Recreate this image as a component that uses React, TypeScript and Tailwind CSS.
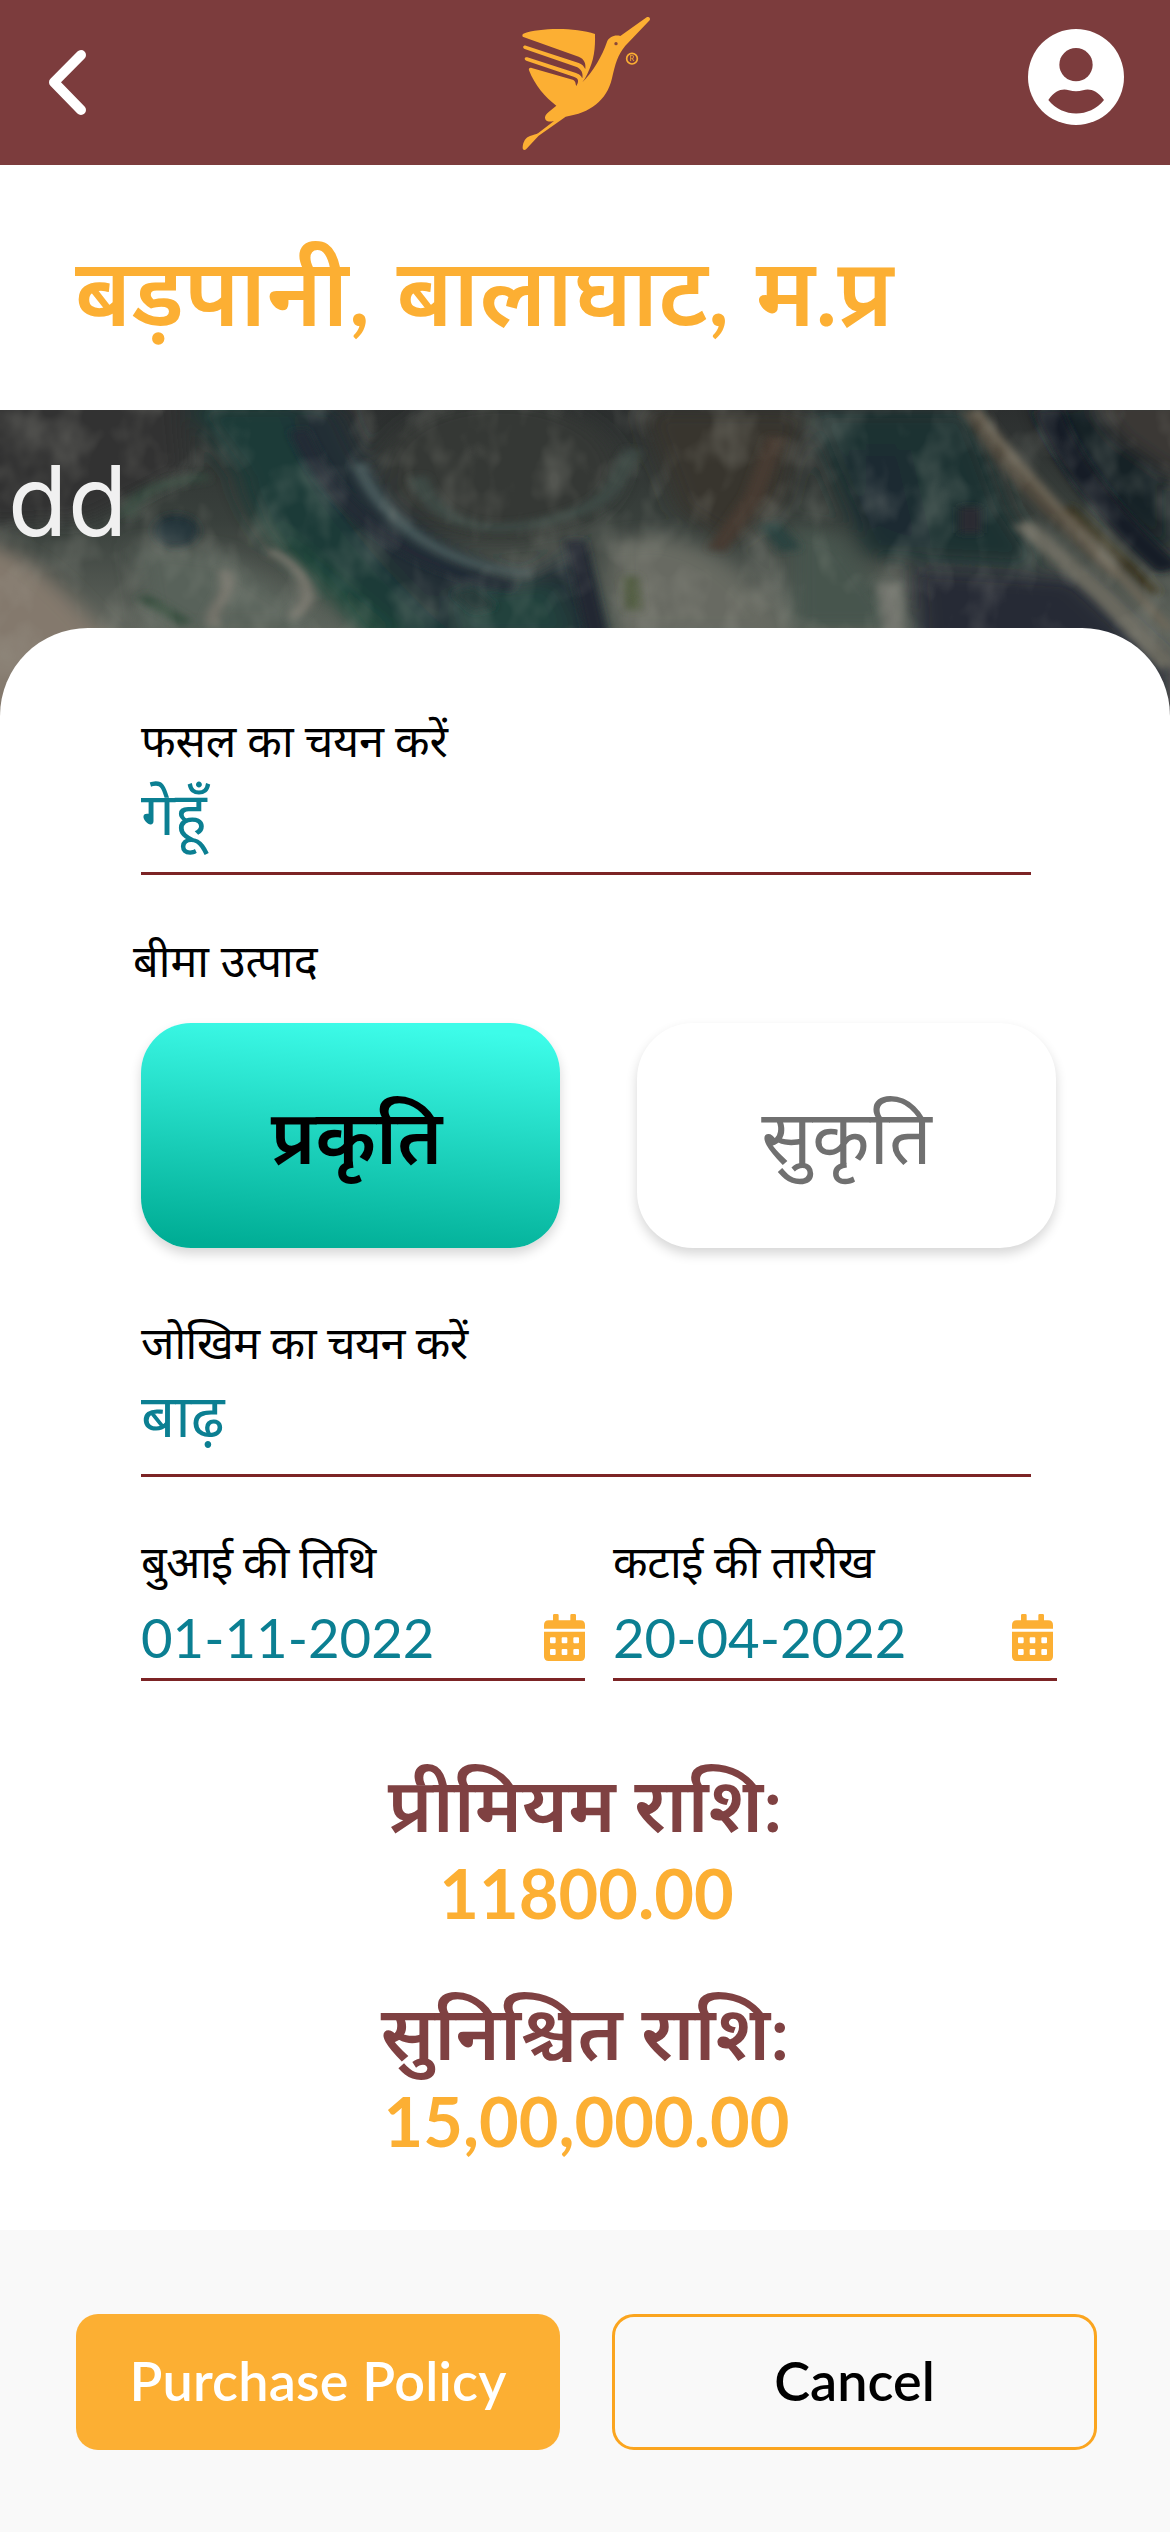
import React from "react";

function Bird() {
  return (
    <svg className="h-[165px] w-[220px]" viewBox="0 0 660 495" fill="#fcaf33">
      <path d="M130 101 C180 83 285 82 345 102 C346 145 343 180 322 222 C317 233 312 240 307 247 C338 217 368 165 380 128 C387 109 405 104 421 108 L500 52 C506 48 513 54 509 61 L436 137 C413 165 406 191 396 235 C380 303 330 339 257 350 L176 407 L139 447 C133 453 127 449 128 441 C129 426 137 412 150 408 C160 404 168 404 175 399 L222 363 C208 366 195 366 195 352 C196 345 200 342 206 336 L229 317 C196 293 164 255 147 211 C145 206 149 202 155 204 L278 239 C288 242 286 252 289 258 L293 250 C297 238 291 233 281 230 L139 182 C131 178 134 169 142 172 L288 219 C302 224 304 230 307 235 C310 219 304 206 288 200 L134 147 C126 143 130 134 138 137 L294 188 C310 193 312 201 316 207 C318 190 313 177 296 170 L130 111 C126 109 126 104 130 101Z" />
      <circle cx="408" cy="131" r="5" fill="#8a4838" />
      <circle cx="456" cy="176" r="16" fill="none" stroke="#fcaf33" strokeWidth="5" />
      <text x="456" y="184" textAnchor="middle" fontSize="23" fontWeight="700" fontFamily="Lato, sans-serif" opacity="0.8">R</text>
    </svg>
  );
}

function Account() {
  return (
    <svg className="h-[96px] w-[96px]" viewBox="0 0 288 288">
      <circle cx="144" cy="144" r="144" fill="#fff" />
      <circle cx="144" cy="107" r="50" fill="#7c3c3d" />
      <path d="M61 213 C82 183 104 178 123 184 C137 188 151 188 165 184 C184 178 206 183 228 213 C184 267 105 267 61 213Z" fill="#7c3c3d" />
    </svg>
  );
}

function Calendar() {
  return (
    <svg className="h-[47px] w-[41px]" viewBox="0 0 123 141" fill="#fcaf33">
      <path d="M0 44V33Q0 19 14 19H27V4Q27 0 31 0H40Q44 0 44 4V19H79V4Q79 0 83 0H92Q96 0 96 4V19H109Q123 19 123 33V44Z" />
      <path fillRule="evenodd" d="M0 53H123V127Q123 141 109 141H14Q0 141 0 127ZM21 70H32Q35 70 35 73V84Q35 88 32 88H21Q18 88 18 84V73Q18 70 21 70ZM56 70H67Q70 70 70 73V84Q70 88 67 88H56Q53 88 53 84V73Q53 70 56 70ZM91 70H102Q105 70 105 73V84Q105 88 102 88H91Q88 88 88 84V73Q88 70 91 70ZM21 105H32Q35 105 35 108V119Q35 123 32 123H21Q18 123 18 119V108Q18 105 21 105ZM56 105H67Q70 105 70 108V119Q70 123 67 123H56Q53 123 53 119V108Q53 105 56 105ZM91 105H102Q105 105 105 108V119Q105 123 102 123H91Q88 123 88 119V108Q88 105 91 105Z" />
    </svg>
  );
}

function Terrain() {
  return (
    <svg className="absolute inset-0 h-full w-full" viewBox="0 0 1568 960" preserveAspectRatio="none">
      <defs>
        <linearGradient id="base" x1="0" y1="0" x2="0" y2="1">
          <stop offset="0" stopColor="#2c2f2f" />
          <stop offset="0.35" stopColor="#39403c" />
          <stop offset="0.7" stopColor="#62675f" />
          <stop offset="1" stopColor="#77746a" />
        </linearGradient>
        <filter id="soft" x="-30%" y="-30%" width="160%" height="160%">
          <feGaussianBlur stdDeviation="16 26" />
        </filter>
        <filter id="fine" x="-30%" y="-30%" width="160%" height="160%">
          <feGaussianBlur stdDeviation="6 11" />
        </filter>
        <filter id="grain" x="0" y="0" width="100%" height="100%">
          <feTurbulence type="fractalNoise" baseFrequency="0.018 0.006" numOctaves="3" seed="8" />
          <feColorMatrix values="0 0 0 0 0.42  0 0 0 0 0.42  0 0 0 0 0.36  2.4 0 0 0 -1.05" />
        </filter>
      </defs>
      <rect width="1568" height="960" fill="url(#base)" />
      <g filter="url(#soft)">
        <path d="M-60 380 C20 400 60 470 150 700 L60 1000 H-60Z" fill="#84796d" />
        <path d="M-40 -40 H240 L250 180 L120 330 L-40 350Z" fill="#303232" />
        <path d="M250 -20 H440 C440 120 500 330 590 480 C650 560 720 560 770 400 L830 700 H490 C440 520 330 380 320 200Z" fill="#1f3a37" />
        <path d="M340 300 L540 680 H490 C440 540 370 450 340 300Z" fill="#214c3c" />
        <path d="M390 0 H460 C480 160 560 420 700 510 L770 420 L800 700 H620 C520 500 420 260 390 0Z" fill="#232d36" />
        <path d="M600 560 L740 520 L770 680 H620Z" fill="#24423d" />
        <ellipse cx="670" cy="180" rx="160" ry="210" fill="#343936" />
        <path d="M860 0 H1080 L1050 280 L980 400 L910 300Z" fill="#38342e" />
        <path d="M820 400 C900 330 1000 440 1060 680 H820Z" fill="#676b62" />
        <path d="M1060 340 L1130 380 L1220 660 H1060Z" fill="#46544e" />
        <path d="M1080 0 H1300 L1350 300 L1400 470 L1160 440Z" fill="#1c3230" />
        <path d="M1150 120 L1210 120 L1240 420 L1150 340Z" fill="#1c2a33" />
        <path d="M1220 470 L1440 500 L1568 760 L1568 1000 L1230 720Z" fill="#262a36" />
        <path d="M1390 -20 H1568 V450 C1500 330 1420 160 1390 -20Z" fill="#192226" />
        <path d="M1460 -40 H1600 V240 L1500 80Z" fill="#3b3735" />
        <path d="M180 400 L300 430 L460 660 H200Z" fill="#59625a" />
      </g>
      <g filter="url(#fine)" fill="none">
        <path d="M170 320 C180 230 240 210 280 200" stroke="#36463c" strokeWidth="24" />
        <ellipse cx="236" cy="362" rx="30" ry="48" fill="#1e2d36" />
        <path d="M480 160 C510 330 590 470 710 490" stroke="#46585a" strokeWidth="20" />
        <path d="M560 200 C580 330 640 390 740 330 S820 200 850 120" stroke="#3e4a45" strokeWidth="26" />
        <path d="M400 60 C440 270 540 480 690 530" stroke="#222b36" strokeWidth="26" />
        <path d="M360 420 C410 470 430 580 390 620 M300 480 C320 560 270 600 290 650" stroke="#75736a" strokeWidth="18" />
        <path d="M190 560 L250 640" stroke="#37503f" strokeWidth="20" />
        <path d="M770 390 L800 680" stroke="#202833" strokeWidth="28" />
        <path d="M1300 0 C1340 170 1420 330 1500 500" stroke="#4f483c" strokeWidth="22" />
        <path d="M1310 0 C1360 160 1420 290 1470 420 L1568 660" stroke="#6f6759" strokeWidth="12" />
        <path d="M1370 340 L1480 560 L1568 770" stroke="#6a695f" strokeWidth="30" />
        <path d="M1405 0 C1430 160 1500 350 1568 480" stroke="#141e26" strokeWidth="38" />
        <path d="M1430 290 L1550 550" stroke="#39331f" strokeWidth="16" />
        <path d="M1040 80 L1010 260 L960 420" stroke="#463b31" strokeWidth="26" />
        <path d="M1030 340 L1060 420" stroke="#29433f" strokeWidth="30" />
        <path d="M1300 290 V370" stroke="#2c2930" strokeWidth="30" />
        <path d="M620 540 L650 600" stroke="#1f3330" strokeWidth="36" />
        <path d="M845 500 L850 600" stroke="#505a41" strokeWidth="22" />
        <path d="M1190 520 L1200 680" stroke="#6c6e68" strokeWidth="30" />
      </g>
      <rect width="1568" height="960" filter="url(#grain)" opacity="0.25" />
    </svg>
  );
}

const labelBase = "h-[66px] text-[45px] leading-[62px] text-black ";

function Select({ label, value, tracking }: { label: string; value: string; tracking: string }) {
  return (
    <div className="flex h-[166px] w-[890px] flex-col border-b-[3px] border-[#7c2425]">
      <div className={labelBase + tracking}>{label}</div>
      <div className="h-[84px] text-[60px] leading-[74px] text-[#0b7f92]">{value}</div>
    </div>
  );
}

function DateField({ label, value, tracking, iconPad }: { label: string; value: string; tracking: string; iconPad: string }) {
  return (
    <div className="h-[151px] w-[444px] border-b-[3px] border-[#7c2425]">
      <div className={labelBase + tracking}>{label}</div>
      <div className={"flex h-[82px] items-center justify-between " + iconPad}>
        <span className="text-[54.5px] leading-[80px] text-[#0b7f92]">{value}</span>
        <Calendar />
      </div>
    </div>
  );
}

function Amount({ label, value }: { label: string; value: string }) {
  return (
    <div className="flex h-[228px] flex-col items-center">
      <div className="h-[90px] text-[75px] font-semibold leading-[91px] text-[#7f4142]">{label}</div>
      <div className="h-[90px] pl-[3px] text-[68.5px] font-bold leading-[90px] text-[#fcaf33]">{value}</div>
    </div>
  );
}

export default function App() {
  return (
    <div className="flex h-[2532px] w-[1170px] flex-col overflow-hidden bg-white font-['Lato','Noto_Sans_Devanagari','Noto_Sans',sans-serif]">
      <header className="flex h-[165px] shrink-0 justify-between bg-[#7c3c3d] pl-[49px] pr-[47px]">
        <svg className="mt-[50px] h-[65px] w-[37px]" viewBox="0 0 111 195" fill="none">
          <path d="M96 15 L15 97 L96 180" stroke="#fff" strokeWidth="30" strokeLinecap="round" strokeLinejoin="round" />
        </svg>
        <div className="ml-[66px]"><Bird /></div>
        <div className="-mr-[1px] mt-[29px]"><Account /></div>
      </header>
      <div className="h-[245px] shrink-0 pl-[75px] pt-[60px]">
        <h1 className="text-[94px] font-semibold leading-[130px] text-[#fcaf33] [word-spacing:3px]">बड़पानी, बालाघाट, म.प्र</h1>
      </div>
      <div className="relative h-[320px] shrink-0 overflow-hidden bg-[#3a403c]">
        <Terrain />
        <div className="relative pl-[8px] pt-[31px] font-['Inter',sans-serif] text-[97px] font-normal leading-[120px] tracking-[0.5px] text-[#f0f0f0]">dd</div>
      </div>
      <main className="relative -mt-[102px] h-[1602px] shrink-0 rounded-t-[88px] bg-white pt-[81px]">
        <div className="pl-[141px]">
          <Select label="फसल का चयन करें" value="गेहूँ" tracking="tracking-[-0.2px]" />
          <div className={labelBase + "-ml-[8px] mt-[54px] tracking-[0.1px]"}>बीमा उत्पाद</div>
          <div className="mt-[28px] flex gap-[77px]">
            <button className="h-[225px] w-[419px] rounded-[50px] bg-[linear-gradient(5deg,#00ad95_4%,#3dfce9_94%)] pb-[2px] pl-[12px] text-[75px] font-semibold leading-[100px] text-black shadow-[0_6px_12px_rgba(0,0,0,0.16)]">प्रकृति</button>
            <button className="h-[225px] w-[419px] rounded-[56px] bg-white pb-[2px] text-[75px] leading-[100px] text-[#707070] shadow-[0_6px_12px_rgba(0,0,0,0.16)]">सुकृति</button>
          </div>
          <div className="mt-[63px]">
            <Select label="जोखिम का चयन करें" value="बाढ़" tracking="tracking-[-0.6px]" />
          </div>
          <div className="mt-[53px] flex gap-[28px]">
            <DateField label="बुआई की तिथि" value="01-11-2022" tracking="tracking-[-0.8px]" iconPad="pr-0" />
            <DateField label="कटाई की तारीख" value="20-04-2022" tracking="tracking-[-0.35px]" iconPad="pr-[4px]" />
          </div>
        </div>
        <div className="mt-[77px]">
          <Amount label="प्रीमियम राशि:" value="11800.00" />
          <Amount label="सुनिश्चित राशि:" value="15,00,000.00" />
        </div>
      </main>
      <footer className="flex h-[302px] shrink-0 gap-[52px] bg-[#f9f9f9] pl-[76px] pt-[84px]">
        <button className="h-[136px] w-[484px] rounded-[22px] bg-[#fcaf33] pb-[3px] text-[54px] font-semibold tracking-[0.2px] text-white">Purchase Policy</button>
        <button className="h-[136px] w-[485px] rounded-[22px] border-[3px] border-[#fba51f] pb-[3px] text-[54px] font-semibold text-black">Cancel</button>
      </footer>
    </div>
  );
}
